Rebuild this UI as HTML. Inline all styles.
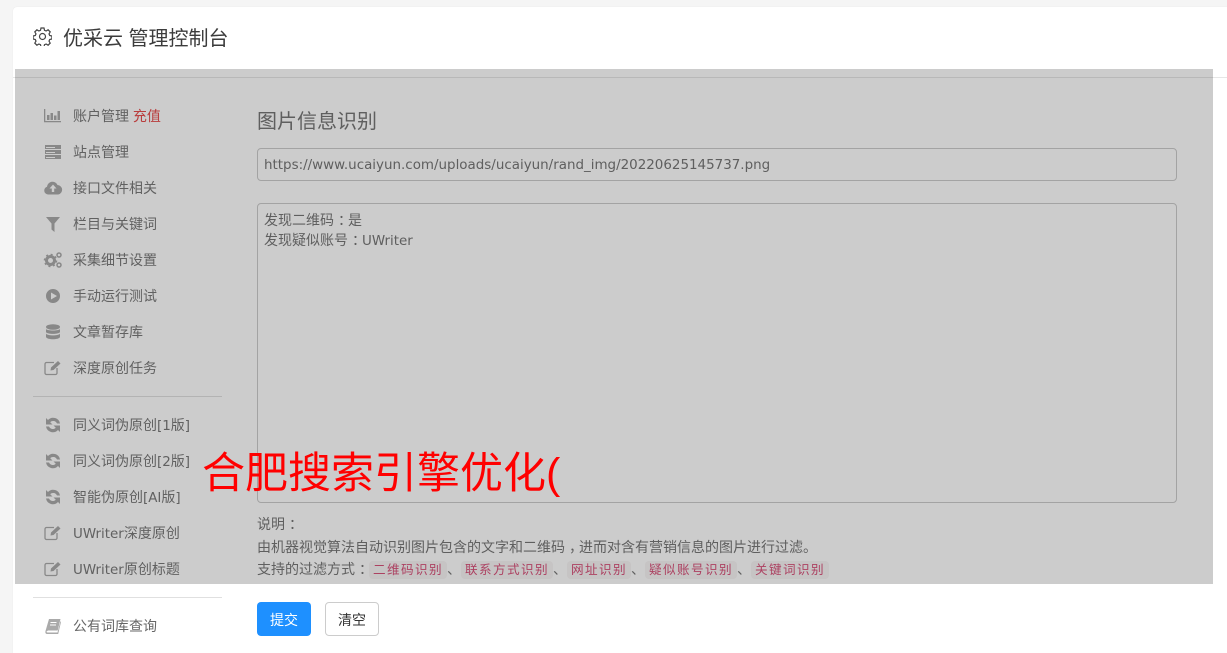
<!DOCTYPE html>
<html lang="zh-CN"><head><meta charset="utf-8"><title>优采云 管理控制台</title>
<style>
html,body{margin:0;padding:0;width:1227px;height:653px;overflow:hidden}
body{position:relative;background:#f5f5f5;font-family:"Liberation Sans","Noto Sans CJK SC",sans-serif;color:#777;font-size:14px}
.a{position:absolute;white-space:nowrap}
#wrap{position:absolute;left:0;top:0;width:1227px;height:653px;overflow:hidden}
#card{position:absolute;left:13px;top:7px;width:1214px;height:646px;background:#fff;border-radius:4px 0 0 0;box-shadow:0 0 1px rgba(0,0,0,.1)}
#hl{position:absolute;left:13px;top:77px;width:1214px;height:1px;background:#e6e6e6}
.m{left:73px;line-height:20px;height:20px;color:#7a7a7a}
.i{position:absolute;left:43px;width:20px;height:20px;fill:#aaa;color:#aaa}
.hr{position:absolute;left:33px;width:189px;height:1px;background:#e0e0e0}
.box{position:absolute;left:257px;width:918px;border:1px solid #ccc;border-radius:4px;background:#fff}
code{font-family:"Liberation Sans","Noto Sans CJK SC",sans-serif;font-size:12.6px;letter-spacing:1.4px;color:#d8527a;background:#f8f5f6;border-radius:4px;padding:2px 4px}
.l{font-family:"DejaVu Sans",sans-serif;font-size:13.45px}
.c{display:inline-block;transform:translateX(4px)}
.btn{position:absolute;top:602px;height:34px;line-height:36px;text-align:center;border-radius:4px;box-sizing:border-box}
#ov{position:absolute;left:15px;top:69px;width:1198px;height:515px;background:rgba(0,0,0,.2)}
</style></head><body><div id="wrap">
<div id="card"></div>
<div id="hl"></div>
<svg class="a" style="left:33px;top:27px" width="19" height="19" viewBox="0 0 19 19" fill="none" stroke="#444" stroke-width="1.2"><path d="M8 1h3l.5 2.300 1.600.7 2-1.200 2.100 2.100-1.200 2 .7 1.600 2.200.5v3l-2.200.5-.7 1.600 1.200 2-2.100 2.100-2-1.200-1.600.7-.5 2.200H8l-.5-2.200-1.600-.7-2 1.200-2.100-2.100 1.200-2-.7-1.600-2.200-.5v-3l2.200-.5.7-1.600-1.200-2 2.100-2.100 2 1.200 1.600-.7z"/><circle cx="9.500" cy="9.500" r="3"/></svg>
<div class="a" style="left:63px;top:24px;font-size:20px;line-height:30px;color:#3c3c3c">优采云 管理控制台</div>

<svg class="i" style="top:106px" viewBox="0 0 20 20"><path d="M1 3h1.300v12H18v1.300H1z"/><path d="M4 9h2.500v5H4zM7.500 7h2.500v7H7.500zM11 9.500h2.500V14H11zM14.500 5H17v9h-2.500z"/></svg>
<div class="a m" style="top:106px">账户管理 <span style="color:#e84c4c">充值</span></div>
<svg class="i" style="top:142px" viewBox="0 0 20 20"><path d="M2 3h16v4H2zM2 8h16v4H2zM2 13h16v4H2z"/><path d="M3 5h9v1H3zM3 10h9v1H3zM3 15h9v1H3z" fill="#fff"/></svg>
<div class="a m" style="top:142px">站点管理</div>
<svg class="i" style="top:178px" viewBox="0 0 20 20"><path d="M5 16.500a4 4 0 0 1-1-7.800A5.500 5.500 0 0 1 14.500 7a4.800 4.800 0 0 1 .8 9.500z"/><path d="M10 6.500 13.500 10.500H11.200V14H8.800V10.500H6.500z" fill="#fff"/></svg>
<div class="a m" style="top:178px">接口文件相关</div>
<svg class="i" style="top:214px" viewBox="0 0 20 20"><path d="M3 3h14l-5.500 6.500V18l-3-2.500V9.500z"/></svg>
<div class="a m" style="top:214px">栏目与关键词</div>
<svg class="i" style="top:250px" viewBox="0 0 20 20"><circle cx="7.500" cy="10.500" r="4" fill="none" stroke="#aaa" stroke-width="3"/><circle cx="7.500" cy="10.500" r="6" fill="none" stroke="#aaa" stroke-width="1.500" stroke-dasharray="2 2.700"/><circle cx="16" cy="5" r="2" fill="none" stroke="#aaa" stroke-width="1.500"/><circle cx="16" cy="15" r="2" fill="none" stroke="#aaa" stroke-width="1.500"/></svg>
<div class="a m" style="top:250px">采集细节设置</div>
<svg class="i" style="top:286px" viewBox="0 0 20 20"><path fill-rule="evenodd" d="M10 3a7 7 0 1 1 0 14 7 7 0 0 1 0-14zM8 6.500v7l6-3.500z"/></svg>
<div class="a m" style="top:286px">手动运行测试</div>
<svg class="i" style="top:322px" viewBox="0 0 20 20"><ellipse cx="10" cy="5" rx="7" ry="2.800"/><path d="M3 7c1 2 13 2 14 0v3c-1 2.500-13 2.500-14 0zM3 11.500c1 2.500 13 2.500 14 0V15c-1 3-13 3-14 0z"/></svg>
<div class="a m" style="top:322px">文章暂存库</div>
<svg class="i" style="top:358px" viewBox="0 0 20 20"><path d="M14 10v5a1.500 1.500 0 0 1-1.500 1.500h-9A1.500 1.500 0 0 1 2 15V6a1.500 1.500 0 0 1 1.500-1.500H11" fill="none" stroke="#aaa" stroke-width="1.300"/><path d="M8 9.500 15 3l2.500 2.500-7 6.500L7.500 12.500z"/></svg>
<div class="a m" style="top:358px">深度原创任务</div>
<div class="hr" style="top:396px"></div>

<svg class="i" style="top:415px" viewBox="0 0 20 20"><path d="M17 8.500A7 7 0 0 0 5 5L3 3v6.500h6.500L7.200 7.200A4.200 4.200 0 0 1 14 8.500zM3 11.500A7 7 0 0 0 15 15l2 2v-6.500h-6.500l2.300 2.300A4.200 4.200 0 0 1 6 11.500z"/></svg>
<div class="a m" style="top:415px">同义词伪原创<span class="l">[1</span>版<span class="l">]</span></div>
<svg class="i" style="top:451px" viewBox="0 0 20 20"><path d="M17 8.500A7 7 0 0 0 5 5L3 3v6.500h6.500L7.200 7.200A4.200 4.200 0 0 1 14 8.500zM3 11.500A7 7 0 0 0 15 15l2 2v-6.500h-6.500l2.300 2.300A4.200 4.200 0 0 1 6 11.500z"/></svg>
<div class="a m" style="top:451px">同义词伪原创<span class="l">[2</span>版<span class="l">]</span></div>
<svg class="i" style="top:487px" viewBox="0 0 20 20"><path d="M17 8.500A7 7 0 0 0 5 5L3 3v6.500h6.500L7.200 7.200A4.200 4.200 0 0 1 14 8.500zM3 11.500A7 7 0 0 0 15 15l2 2v-6.500h-6.500l2.300 2.300A4.200 4.200 0 0 1 6 11.500z"/></svg>
<div class="a m" style="top:487px">智能伪原创<span class="l">[AI</span>版<span class="l">]</span></div>
<svg class="i" style="top:523px" viewBox="0 0 20 20"><path d="M14 10v5a1.500 1.500 0 0 1-1.500 1.500h-9A1.500 1.500 0 0 1 2 15V6a1.500 1.500 0 0 1 1.500-1.500H11" fill="none" stroke="#aaa" stroke-width="1.300"/><path d="M8 9.500 15 3l2.500 2.500-7 6.500L7.500 12.500z"/></svg>
<div class="a m" style="top:523px"><span class="l">UWriter</span>深度原创</div>
<svg class="i" style="top:559px" viewBox="0 0 20 20"><path d="M14 10v5a1.500 1.500 0 0 1-1.500 1.500h-9A1.500 1.500 0 0 1 2 15V6a1.500 1.500 0 0 1 1.500-1.500H11" fill="none" stroke="#aaa" stroke-width="1.300"/><path d="M8 9.500 15 3l2.500 2.500-7 6.500L7.500 12.500z"/></svg>
<div class="a m" style="top:559px"><span class="l">UWriter</span>原创标题</div>
<div class="hr" style="top:597px"></div>
<svg class="i" style="top:616px" viewBox="0 0 20 20"><path d="M6 3h11.500l-2.800 11.500H5L3.500 15.500c0 .8.500 1 1.500 1h9.500l3-11.500.5 1-2.800 12H4.500C2.800 18 2 17 2.500 15z"/><path d="M7.500 6h6v1h-6zM7 8.500h6v1H7z" fill="#fff"/></svg>
<div class="a m" style="top:616px;color:#666">公有词库查询</div>

<div class="a" style="left:257px;top:107px;font-size:20px;line-height:30px;color:#777">图片信息识别</div>
<div class="box" style="top:148px;height:31px"></div>
<div class="a l" style="left:264px;top:156px;line-height:20px;color:#777">https://www.ucaiyun.com/uploads/ucaiyun/rand_img/20220625145737.png</div>
<div class="box" style="top:203px;height:298px"></div>
<div class="a" style="left:264px;top:210px;line-height:20px;color:#777">发现二维码<span class="c">：</span>是<br>发现疑似账号<span class="c">：</span><span class="l">UWriter</span></div>

<div class="a" style="left:257px;top:514px;line-height:20px;color:#777">说明<span class="c">：</span></div>
<div class="a" style="left:257px;top:537px;line-height:20px;color:#777">由机器视觉算法自动识别图片包含的文字和二维码<span class="c">，</span>进而对含有营销信息的图片进行过滤。</div>
<div class="a" style="left:257px;top:559px;line-height:20px;color:#777">支持的过滤方式<span class="c">：</span></div>
<div class="a" style="left:369px;top:559px;line-height:20px"><code>二维码识别</code></div>
<div class="a" style="left:447px;top:559px;line-height:20px">、</div>
<div class="a" style="left:461px;top:559px;line-height:20px"><code>联系方式识别</code></div>
<div class="a" style="left:553px;top:559px;line-height:20px">、</div>
<div class="a" style="left:567px;top:559px;line-height:20px"><code>网址识别</code></div>
<div class="a" style="left:631px;top:559px;line-height:20px">、</div>
<div class="a" style="left:645px;top:559px;line-height:20px"><code>疑似账号识别</code></div>
<div class="a" style="left:737px;top:559px;line-height:20px">、</div>
<div class="a" style="left:751px;top:559px;line-height:20px"><code>关键词识别</code></div>

<div class="btn" style="left:257px;width:54px;background:#1e90ff;color:#fff">提交</div>
<div class="btn" style="left:325px;width:54px;background:#fff;border:1px solid #ccc;color:#333;line-height:34px">清空</div>

<div id="ov"></div>
<div class="a" style="left:202px;top:444px;font-size:43px;line-height:60px;color:#f00">合肥搜索引擎优化(</div>
</div></body></html>
